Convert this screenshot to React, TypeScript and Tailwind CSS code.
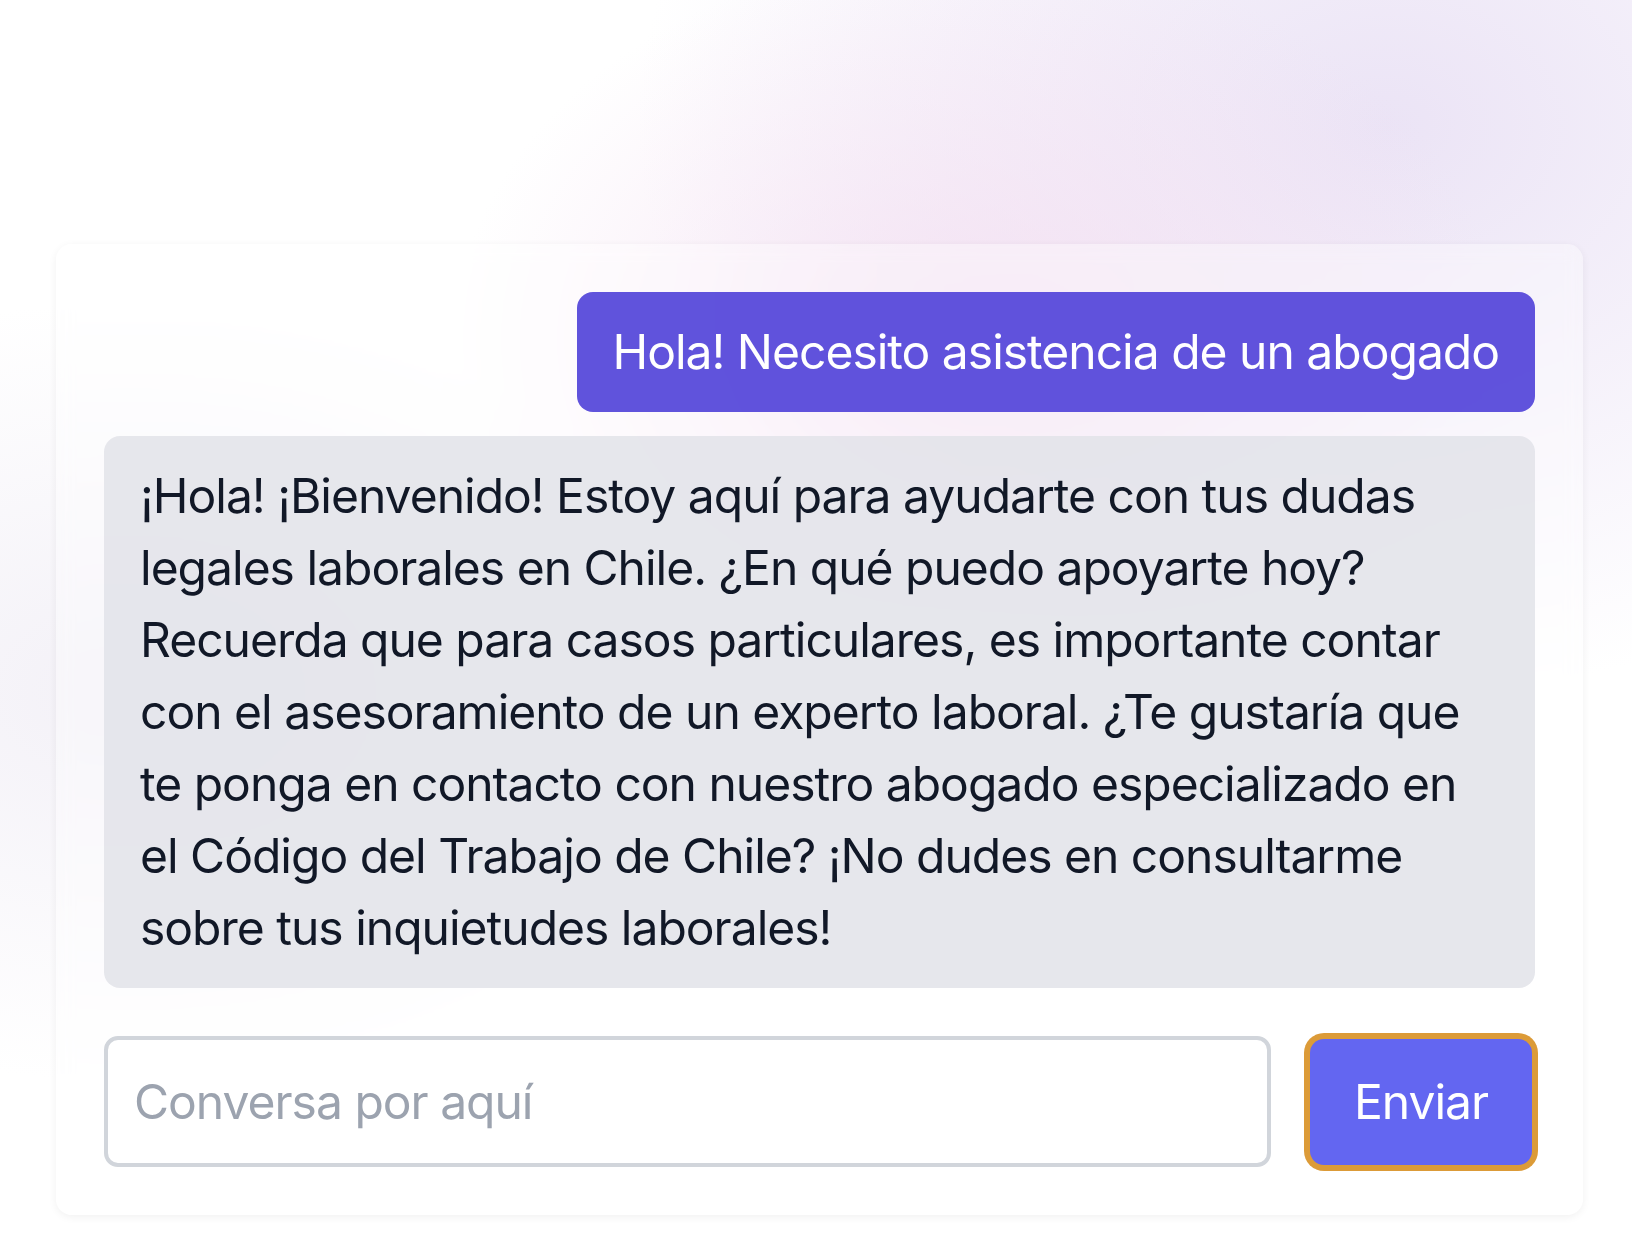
import React, { useState } from 'react';

const ASSISTANT_TEXT =
  '¡Hola! ¡Bienvenido! Estoy aquí para ayudarte con tus dudas legales laborales en Chile. ¿En qué puedo apoyarte hoy? Recuerda que para casos particulares, es importante contar con el asesoramiento de un experto laboral. ¿Te gustaría que te ponga en contacto con nuestro abogado especializado en el Código del Trabajo de Chile? ¡No dudes en consultarme sobre tus inquietudes laborales!';

const App = () => {
  const [message, setMessage] = useState('');

  return (
    <div
      className="min-h-screen w-full bg-white bg-[radial-gradient(ellipse_700px_520px_at_60%_27%,rgba(243,222,241,0.85),transparent_75%),radial-gradient(ellipse_1000px_760px_at_85%_10%,rgba(234,226,245,0.95),transparent_75%),radial-gradient(ellipse_800px_520px_at_8%_55%,rgba(240,237,245,0.8),transparent_75%)] pt-[244px] pl-[56px] pr-[49px] pb-[43px] font-['Inter','Noto_Sans',sans-serif] tracking-[-1px]"
    >
      <div className="rounded-[16px] bg-white/35 p-12 shadow-[0_2px_8px_rgba(0,0,0,0.06)] backdrop-blur-sm">
        {/* Mensajes */}
        <div className="flex flex-col gap-6">
          <div className="flex justify-end">
            <div className="rounded-[16px] bg-[#4f40d8]/90 px-9 py-6 text-[48px] leading-[72px] text-white">
              Hola! Necesito asistencia de un abogado
            </div>
          </div>
          <div className="flex justify-start">
            <div className="rounded-[16px] bg-[#e2e3e9]/85 px-9 py-6 text-[48px] leading-[72px] text-[#111827]">
              {ASSISTANT_TEXT}
            </div>
          </div>
        </div>

        {/* Entrada */}
        <div className="mt-12 flex items-center gap-[39px]">
          <input
            value={message}
            onChange={(e) => setMessage(e.target.value)}
            placeholder="Conversa por aquí"
            className="h-[131px] flex-1 rounded-[14px] border-[4px] border-[#d1d5db] bg-white px-[26px] text-[48px] text-[#111827] outline-none placeholder:text-[#9ca3af]"
          />
          <button className="mr-[3px] h-[126px] w-[222px] rounded-[14px] bg-[#6366f1] text-[48px] text-white ring-[6px] ring-[#dc9b38]">
            Enviar
          </button>
        </div>
      </div>
    </div>
  );
};

export default App;
